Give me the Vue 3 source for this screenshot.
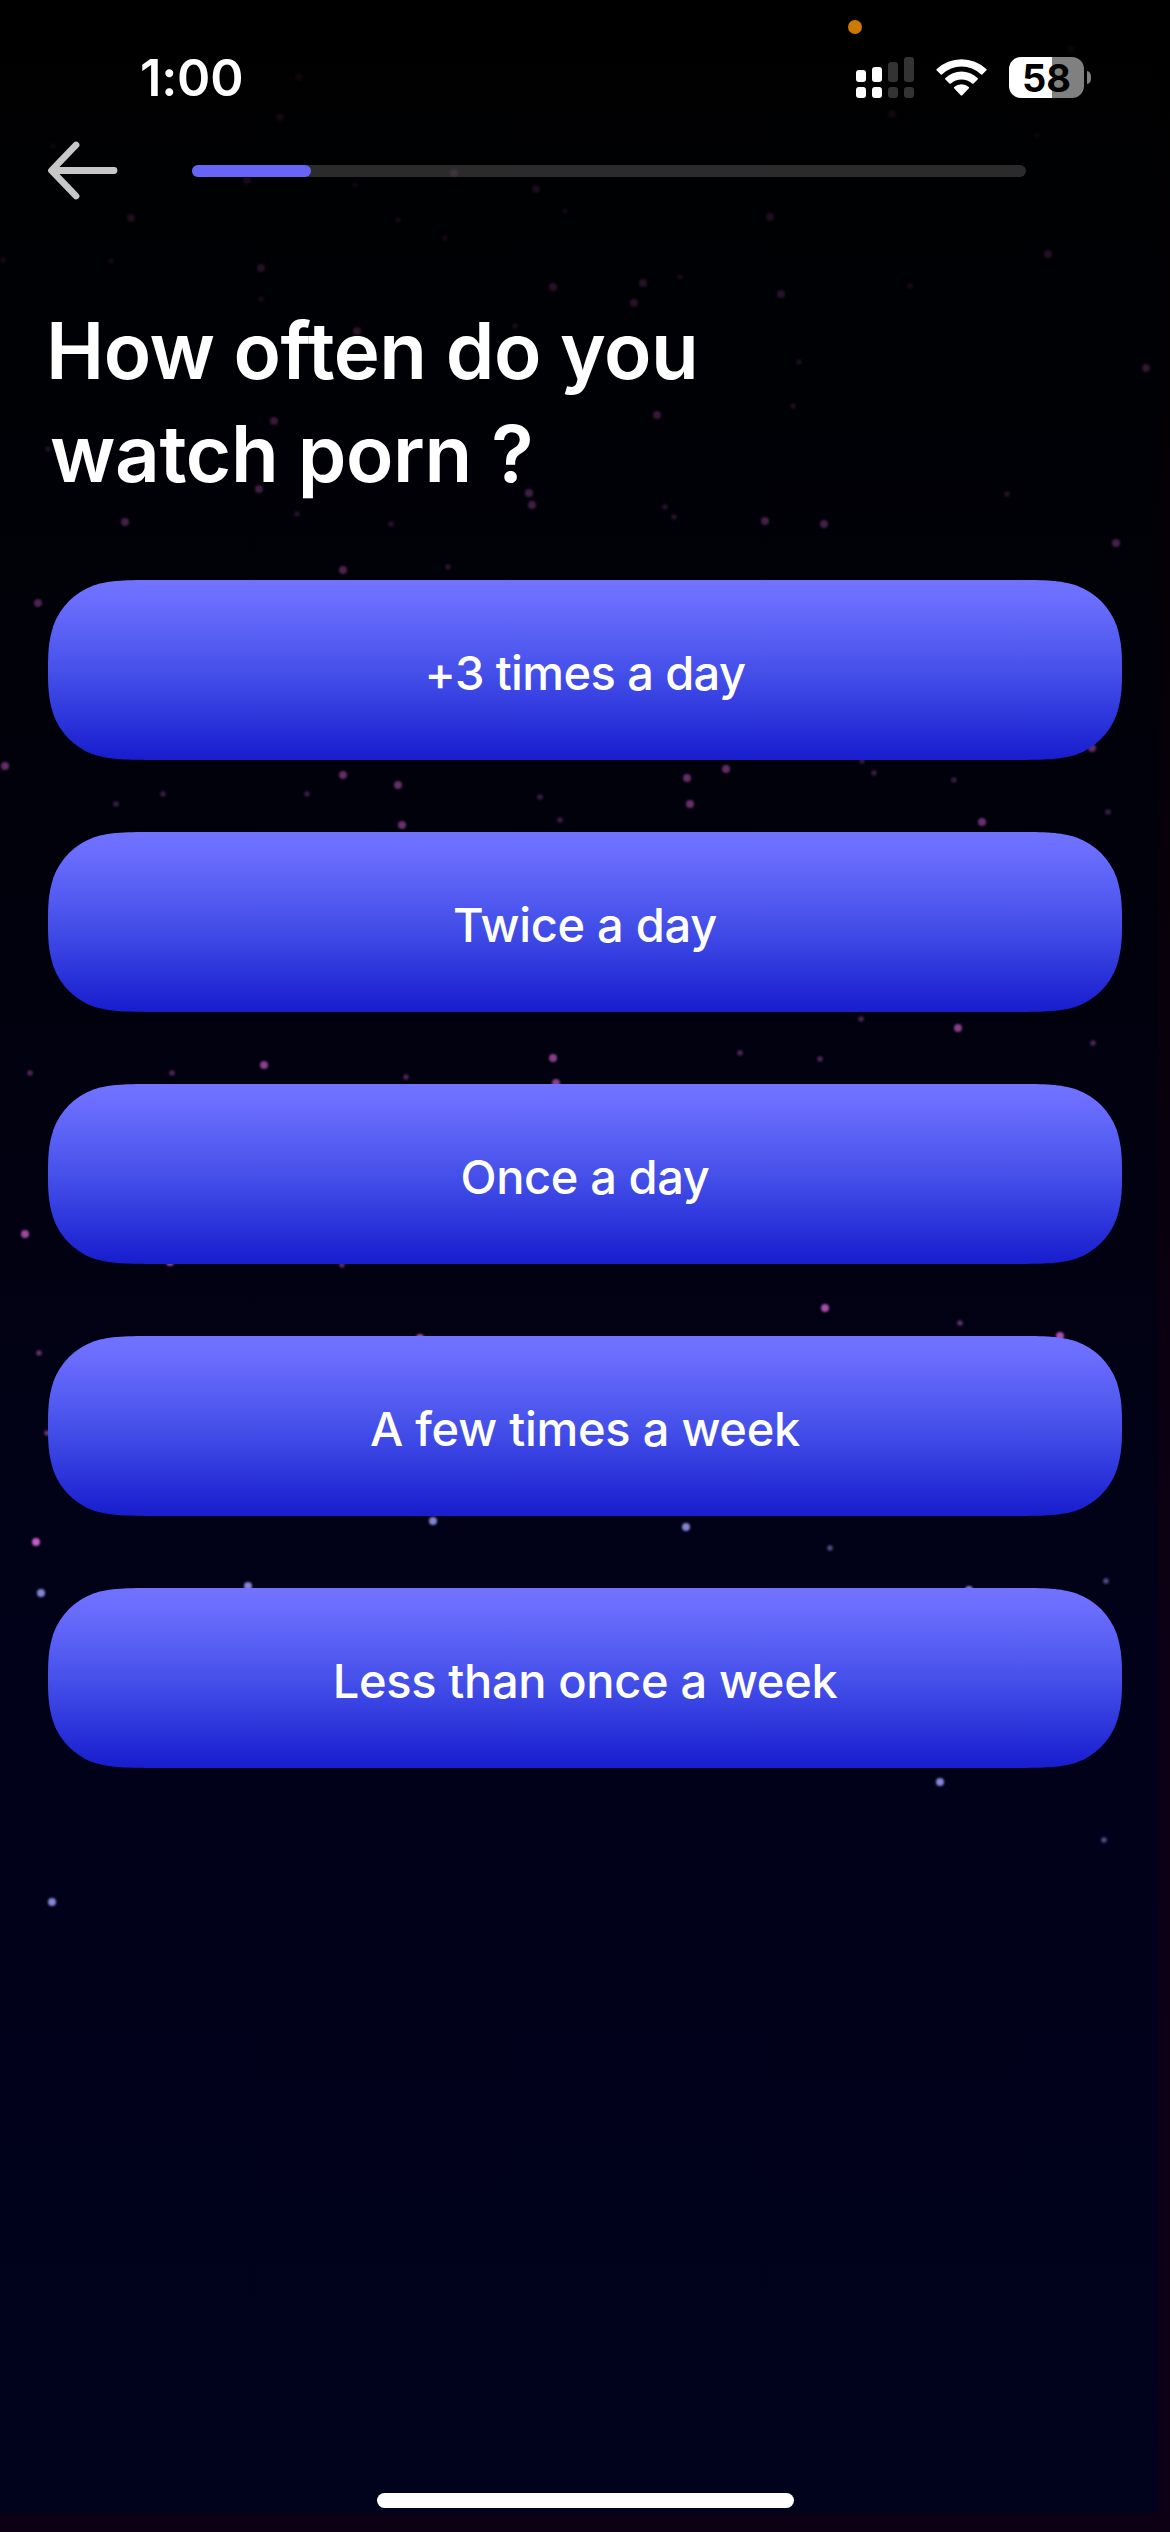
<script setup>
const options = [
  { label: '+3 times a day', cls: 'plus' },
  { label: 'Twice a day', cls: 'twice' },
  { label: 'Once a day', cls: 'once' },
  { label: 'A few times a week', cls: 'few' },
  { label: 'Less than once a week', cls: 'less' },
]

// x, y of the bright stars
const large = [
  [280, 117], [299, 77], [247, 180], [454, 173], [536, 189], [892, 114], [1071, 49],
  [131, 218], [770, 217], [1048, 254], [261, 268], [553, 287], [643, 283], [634, 303],
  [781, 294], [357, 331], [1146, 368], [657, 415], [274, 421], [259, 489], [529, 493],
  [532, 505], [765, 521], [824, 524], [1116, 543], [125, 522], [343, 570], [38, 603],
  [5, 766], [343, 775], [398, 785], [687, 778], [726, 769], [690, 804], [402, 825],
  [982, 822], [1092, 748], [958, 1028], [553, 1058], [556, 1083], [264, 1065],
  [25, 1234], [825, 1308], [1060, 1336], [420, 1338], [170, 1262], [36, 1542],
  [41, 1593], [433, 1521], [686, 1527], [248, 1586], [969, 1590], [940, 1782], [52, 1902],
]
// x, y of the dim stars
const small = [
  [53, 146], [355, 185], [565, 211], [1037, 135], [680, 277], [910, 286], [111, 261],
  [445, 238], [398, 220], [3, 260], [261, 299], [515, 326], [799, 362], [793, 406],
  [48, 449], [665, 507], [674, 517], [1007, 494], [297, 514], [391, 524], [448, 567],
  [116, 804], [163, 794], [307, 794], [540, 797], [560, 820], [874, 773], [862, 761],
  [954, 780], [1108, 812], [861, 1019], [1093, 1043], [740, 1053], [820, 1059],
  [406, 1077], [172, 1073], [30, 1073], [342, 1265], [960, 1323], [39, 1353],
  [47, 1433], [830, 1548], [1106, 1581], [1104, 1840],
]
const tone = (x, y) => (y > 1510 && x !== 36 ? '#9797ee' : '#e068dc')
const glow = (y) => Math.min(0.88, 0.01 + (y / 1540) * 0.87)
const stars = [
  ...large.map(([x, y]) => ({ x, y, r: 4, fill: tone(x, y), o: glow(y) })),
  ...small.map(([x, y]) => ({ x, y, r: 2.8, fill: tone(x, y), o: glow(y) * 0.58 })),
]
</script>

<template>
  <main class="screen">
    <svg class="sky" viewBox="0 0 1170 2532" aria-hidden="true">
      <circle v-for="(s, i) in stars" :key="i" :cx="s.x" :cy="s.y" :r="s.r" :fill="s.fill" :opacity="s.o" />
    </svg>
    <div class="edge-right"></div>
    <div class="edge-bottom"></div>

    <header class="status">
      <span class="time">1:00</span>
      <span class="mic-dot"></span>
      <div class="indicators">
        <svg class="signal" viewBox="0 0 58 41">
          <g fill="#fff">
            <rect x="0" y="13" width="10" height="12" rx="3" />
            <rect x="16" y="10" width="10" height="15" rx="3" />
            <rect x="0" y="30" width="10" height="11" rx="3" />
            <rect x="16" y="30" width="10" height="11" rx="3" />
          </g>
          <g fill="#333">
            <rect x="32" y="5" width="10" height="20" rx="3" />
            <rect x="48" y="0" width="10" height="25" rx="3" />
            <rect x="32" y="30" width="10" height="11" rx="3" />
            <rect x="48" y="30" width="10" height="11" rx="3" />
          </g>
        </svg>
        <svg class="wifi" viewBox="0 0 51 37" fill="#fff">
          <path d="M.7 10.1Q0 10.8.8 11.5L4.7 15.4Q5.4 16 6.2 15.3A28 28 0 0 1 44.8 15.3Q45.6 16 46.3 15.4L50.2 11.5Q51 10.8 50.3 10.1A36 36 0 0 0 .7 10.1Z" />
          <path d="M9.4 19Q8.6 19.8 9.4 20.5L13.4 24.5Q14.1 25.1 14.9 24.4A16 16 0 0 1 36.1 24.4Q36.9 25.1 37.6 24.5L41.6 20.5Q42.4 19.8 41.6 19A23.4 23.4 0 0 0 9.4 19Z" />
          <path d="M18.2 28Q17.5 28.7 18.3 29.5L24.7 36.2Q25.5 37 26.3 36.2L32.7 29.5Q33.5 28.7 32.8 28A11 11 0 0 0 18.2 28Z" />
        </svg>
        <div class="battery">
          <span class="cell">58</span>
          <span class="nub"></span>
        </div>
      </div>
    </header>

    <nav class="topbar">
      <svg class="back" viewBox="0 0 72 60" fill="none" stroke="#c7c7c7" stroke-width="6.8" stroke-linecap="round" stroke-linejoin="round">
        <path d="M29 5 4.5 30.5 29 56M5.5 30.5H67" />
      </svg>
      <div class="track"><div class="fill"></div></div>
    </nav>

    <h1 class="question"><span class="l1">How often do you</span><br /><span class="l2">watch porn ?</span></h1>

    <section class="options">
      <button v-for="o in options" :key="o.label" class="option"><span :class="o.cls">{{ o.label }}</span></button>
    </section>

    <div class="home"></div>
  </main>
</template>

<style>
body {
  margin: 0;
  background: #000;
}
</style>

<style scoped>
.screen {
  position: relative;
  box-sizing: border-box;
  width: 1170px;
  height: 2532px;
  overflow: hidden;
  display: flex;
  flex-direction: column;
  background: linear-gradient(180deg, #000 0, #000104 300px, #010109 650px, #010111 1200px, #01021a 1700px, #01021b 100%);
  color: #fff;
  font-family: Inter, "Liberation Sans", sans-serif;
}
.sky {
  position: absolute;
  inset: 0;
  width: 1170px;
  height: 2532px;
  filter: blur(1px);
}
.edge-right {
  position: absolute;
  top: 0;
  right: 0;
  width: 12px;
  height: 2532px;
  background: linear-gradient(180deg, #000 0, #070009 900px, #0d0015 1700px);
}
.edge-bottom {
  position: absolute;
  left: 0;
  bottom: 0;
  width: 1170px;
  height: 19px;
  background: #0d0015;
}
.status {
  position: relative;
  display: flex;
  justify-content: space-between;
  height: 142px;
}
.time {
  margin: 48px 0 0 140px;
  height: 60px;
  font-size: 50.5px;
  line-height: 60px;
  font-weight: 600;
  letter-spacing: -0.2px;
}
.mic-dot {
  position: absolute;
  left: 848px;
  top: 20px;
  width: 14px;
  height: 14px;
  border-radius: 50%;
  background: #cc7a00;
}
.indicators {
  display: flex;
  align-items: flex-start;
  margin: 57px 79px 0 0;
}
.signal {
  width: 58px;
  height: 41px;
}
.wifi {
  width: 51px;
  height: 37px;
  margin: 2px 22px 0;
}
.battery {
  display: flex;
  align-items: center;
  gap: 3px;
}
.cell {
  width: 75px;
  height: 41px;
  border-radius: 12px;
  background: linear-gradient(90deg, #fff 43px, #808080 43px);
  color: #000;
  font-size: 38px;
  line-height: 42px;
  font-weight: 700;
  text-align: center;
}
.nub {
  width: 4px;
  height: 13px;
  border-radius: 0 5px 5px 0 / 0 7px 7px 0;
  background: #808080;
}
.topbar {
  position: relative;
  display: flex;
  align-items: flex-start;
  height: 58px;
  padding-left: 47px;
}
.back {
  width: 72px;
  height: 60px;
  margin-top: -2px;
}
.track {
  width: 834px;
  height: 12px;
  margin: 23px 0 0 73px;
  border-radius: 6px;
  background: rgba(255, 255, 255, 0.17);
}
.fill {
  width: 119px;
  height: 12px;
  border-radius: 6px;
  background: #6765f8;
}
.question {
  position: relative;
  margin: 99px 0 0 46px;
  height: 281px;
  font-size: 78px;
  line-height: 103px;
  font-weight: 600;
  white-space: nowrap;
}
.l1 {
  letter-spacing: -0.5px;
}
.l2 {
  margin-left: 4px;
  letter-spacing: -0.35px;
}
.options {
  position: relative;
  display: flex;
  flex-direction: column;
  gap: 72px;
  margin: 0 48px;
}
.option {
  display: block;
  height: 180px;
  padding: 6px 0 0;
  border: 0;
  background: linear-gradient(180deg, #7173ff 0%, #6a6dfd 12%, #444fe9 52%, #1a20cf 97%, #191fcc 100%);
  color: #fff;
  font: 500 47px/54px Inter, "Liberation Sans", sans-serif;
  text-align: center;
  clip-path: path("M110 0H964C995.6 0 1011.5 0 1028.5 5.4C1047.2 12.2 1061.8 26.8 1068.6 45.5C1074 62.5 1074 75 1074 90C1074 105 1074 117.5 1068.6 134.5C1061.8 153.2 1047.2 167.8 1028.5 174.6C1011.5 180 995.6 180 964 180H110C78.4 180 62.5 180 45.5 174.6C26.8 167.8 12.2 153.2 5.4 134.5C0 117.5 0 105 0 90C0 75 0 62.5 5.4 45.5C12.2 26.8 26.8 12.2 45.5 5.4C62.5 0 78.4 0 110 0Z");
}
.plus {
  letter-spacing: -0.6px;
}
.twice {
  letter-spacing: -0.3px;
}
.once {
  letter-spacing: -0.4px;
}
.few {
  letter-spacing: -0.25px;
}
.less {
  letter-spacing: -0.35px;
}
.home {
  position: relative;
  width: 417px;
  height: 15px;
  margin: auto auto 24px 377px;
  border-radius: 8px;
  background: #fff;
}
</style>
